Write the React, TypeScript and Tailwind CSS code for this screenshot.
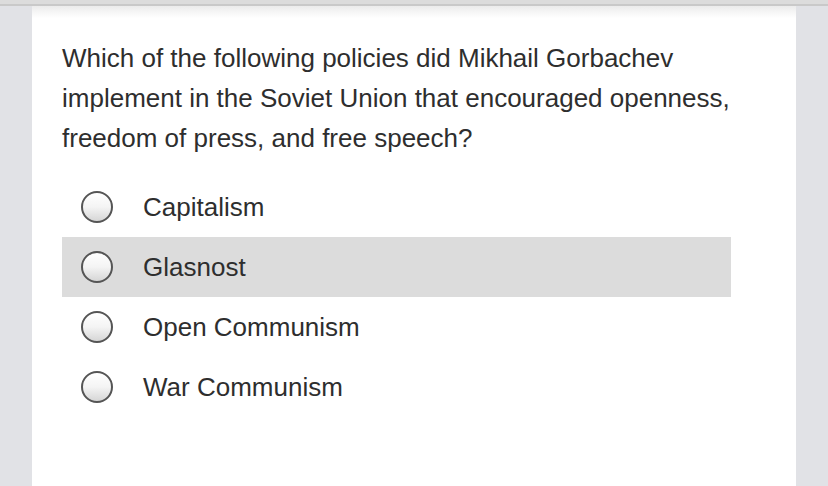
import React from "react";

const options = ["Capitalism", "Glasnost", "Open Communism", "War Communism"];

function Radio() {
  return (
    <div className="w-[32px] h-[32px] rounded-full border-[2.5px] border-[#555] bg-gradient-to-b from-[#ffffff] via-[#f4f4f4] to-[#d6d6d6] shrink-0" />
  );
}

export default function App() {
  return (
    <div
      className="w-[828px] h-[486px] bg-[#e1e2e6] flex flex-col overflow-hidden"
      style={{ fontFamily: "'Liberation Sans', Arial, sans-serif" }}
    >
      <div className="h-[4px] bg-[#dcdcdc] shrink-0" />
      <div className="h-[2px] bg-[#c9c9c9] shrink-0" />
      <div className="flex-1 flex">
        <div className="w-[32px] shrink-0" />
        <div className="w-[764px] bg-white relative">
          <div className="absolute left-0 right-0 top-0 h-[12px] bg-gradient-to-b from-[#ececec] to-white" />
          <div className="relative pl-[30px] pt-[32px]">
            <p className="w-[690px] text-[26px] leading-[40px] text-[#2e2e2e]">
              Which of the following policies did Mikhail Gorbachev implement in the Soviet Union that encouraged openness, freedom of press, and free speech?
            </p>
            <div className="mt-[19px] w-[669px] flex flex-col">
              {options.map((o, i) => (
                <div
                  key={o}
                  className={
                    "h-[60px] flex items-center pl-[19px] " +
                    (i === 1 ? "bg-[#dcdcdc]" : "")
                  }
                >
                  <Radio />
                  <span className="ml-[30px] text-[26px] text-[#2e2e2e]">{o}</span>
                </div>
              ))}
            </div>
          </div>
        </div>
        <div className="flex-1" />
      </div>
    </div>
  );
}
